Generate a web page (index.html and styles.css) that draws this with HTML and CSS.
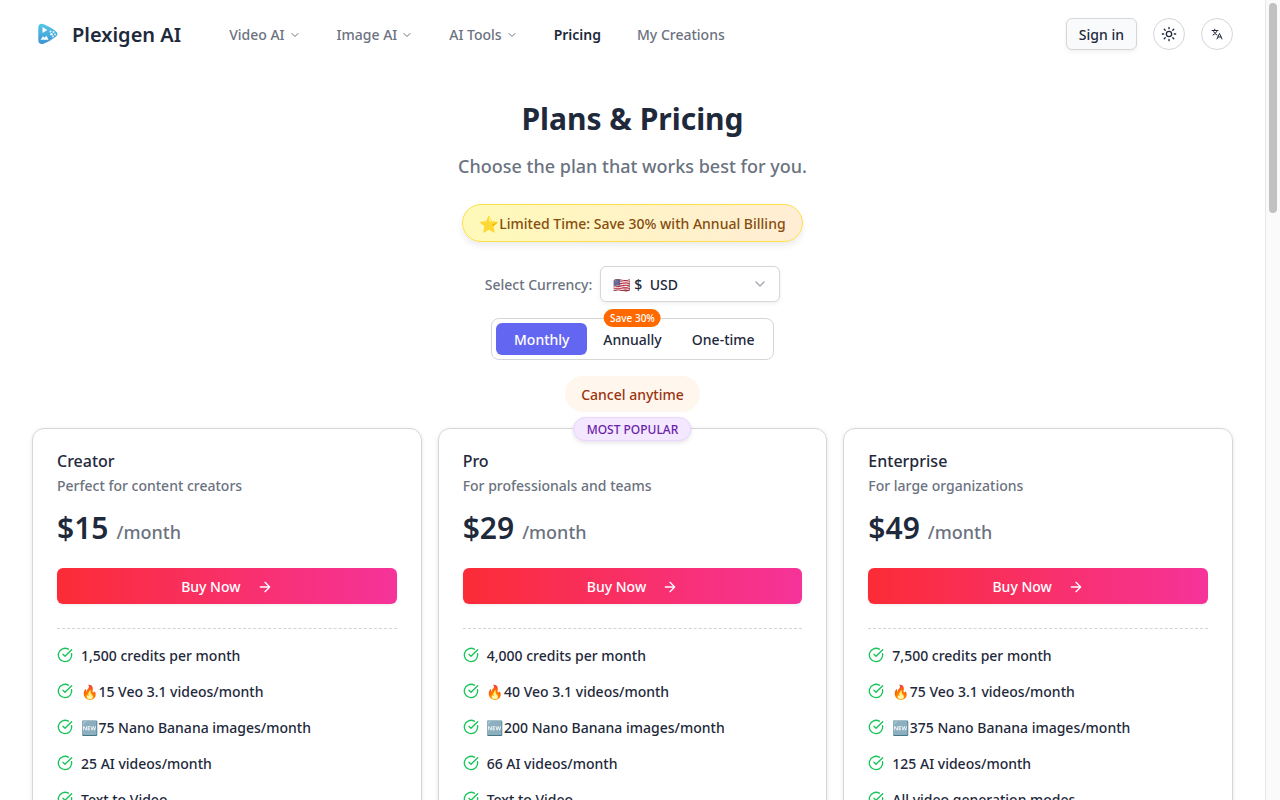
FILE: index.html
```html
<!DOCTYPE html>
<html lang="en">

<head>
    <meta charset="UTF-8">
    <meta name="viewport" content="width=device-width, initial-scale=1">
    <title>Plexigen AI</title>
    <link rel="stylesheet" href="styles.css">
</head>

<body>
    <svg class="sprite" aria-hidden="true">
        <symbol id="chevron" viewBox="0 0 24 24"><path d="m6 9 6 6 6-6"/></symbol>
        <symbol id="arrow" viewBox="0 0 24 24"><path d="M5 12h14M12 5l7 7-7 7"/></symbol>
        <symbol id="check" viewBox="0 0 24 24"><path d="M21.8 10A10 10 0 1 1 17 3.3M9 11l3 3L22 4"/></symbol>
    </svg>

    <header class="header">
        <a class="brand" href="#">
            <svg class="logo" viewBox="0 0 32 32" aria-hidden="true">
                <defs>
                    <linearGradient id="logoFill" x1="0" y1="0" x2="0" y2="1">
                        <stop offset="0" stop-color="#56c8e6"/>
                        <stop offset="1" stop-color="#3d93d6"/>
                    </linearGradient>
                </defs>
                <path fill="url(#logoFill)" d="M6.300 9.500C6.300 6 9 5 12 6.300C16 8 20 10.500 23.500 13C26.200 15 26.200 17 23.500 19C20 21.500 16 24 12 25.500C9 26.800 6.300 25.500 6.300 22.500Z"/>
                <path fill="#fff" d="M10.500 9l4.800 3-4.800 3z"/>
                <path fill="#fff" d="M8.500 21.800l2.500-3.500 1.500 1.500 2-2 2 4z"/>
                <g fill="#e4f7fd">
                    <circle cx="18.500" cy="13.500" r="1"/>
                    <circle cx="21.500" cy="14" r="1"/>
                    <circle cx="19.500" cy="16.300" r="1.300"/>
                    <circle cx="23" cy="16.500" r=".9"/>
                    <circle cx="21" cy="18.500" r=".9"/>
                </g>
            </svg>
            <span>Plexigen AI</span>
        </a>
        <nav class="nav">
            <a href="#">Video AI <svg class="icon"><use href="#chevron"/></svg></a>
            <a href="#">Image AI <svg class="icon"><use href="#chevron"/></svg></a>
            <a href="#">AI Tools <svg class="icon"><use href="#chevron"/></svg></a>
            <a class="active" href="#">Pricing</a>
            <a href="#">My Creations</a>
        </nav>
        <div class="actions">
            <button class="signin" type="button">Sign in</button>
            <button class="round" type="button" aria-label="Theme">
                <svg class="icon" viewBox="0 0 24 24"><circle cx="12" cy="12" r="4"/><path d="M12 2v2M12 20v2M4.900 4.900l1.400 1.400M17.700 17.700l1.400 1.400M2 12h2M20 12h2M6.300 17.700l-1.400 1.400M19.100 4.900l-1.400 1.400"/></svg>
            </button>
            <button class="round lang" type="button" aria-label="Language">
                <svg class="icon" viewBox="0 0 24 24"><path d="M2 5h12M7.500 2.500V5M4 14c4-2 7-5 8-9M4.500 5c1 4 4 7 7.500 9M12 22l5-11 5 11M14 18h6"/></svg>
            </button>
        </div>
    </header>

    <main class="main">
        <section class="intro">
            <h1>Plans &amp; Pricing</h1>
            <p class="subtitle">Choose the plan that works best for you.</p>
            <p class="promo"><span class="star">⭐</span>Limited Time: Save 30% with Annual Billing</p>
            <div class="currency">
                <label for="currency">Select Currency:</label>
                <div class="select">
                    <select id="currency">
                        <option>🇺🇸 $&nbsp; USD</option>
                    </select>
                    <svg class="icon"><use href="#chevron"/></svg>
                </div>
            </div>
            <div class="period">
                <button class="active" type="button">Monthly</button>
                <button type="button">Annually<span class="save">Save 30%</span></button>
                <button type="button">One-time</button>
            </div>
            <p class="cancel">Cancel anytime</p>
        </section>

        <section class="plans">
            <article class="card">
                <h2>Creator</h2>
                <p class="desc">Perfect for content creators</p>
                <p class="price"><strong>$15</strong> <span>/month</span></p>
                <button class="buy" type="button">Buy Now <svg class="icon"><use href="#arrow"/></svg></button>
                <ul class="features">
                    <li><svg class="icon"><use href="#check"/></svg>1,500 credits per month</li>
                    <li><svg class="icon"><use href="#check"/></svg>🔥15 Veo 3.1 videos/month</li>
                    <li><svg class="icon"><use href="#check"/></svg>🆕75 Nano Banana images/month</li>
                    <li><svg class="icon"><use href="#check"/></svg>25 AI videos/month</li>
                    <li><svg class="icon"><use href="#check"/></svg>Text to Video</li>
                </ul>
            </article>
            <article class="card">
                <span class="popular">MOST POPULAR</span>
                <h2>Pro</h2>
                <p class="desc">For professionals and teams</p>
                <p class="price"><strong>$29</strong> <span>/month</span></p>
                <button class="buy" type="button">Buy Now <svg class="icon"><use href="#arrow"/></svg></button>
                <ul class="features">
                    <li><svg class="icon"><use href="#check"/></svg>4,000 credits per month</li>
                    <li><svg class="icon"><use href="#check"/></svg>🔥40 Veo 3.1 videos/month</li>
                    <li><svg class="icon"><use href="#check"/></svg>🆕200 Nano Banana images/month</li>
                    <li><svg class="icon"><use href="#check"/></svg>66 AI videos/month</li>
                    <li><svg class="icon"><use href="#check"/></svg>Text to Video</li>
                </ul>
            </article>
            <article class="card">
                <h2>Enterprise</h2>
                <p class="desc">For large organizations</p>
                <p class="price"><strong>$49</strong> <span>/month</span></p>
                <button class="buy" type="button">Buy Now <svg class="icon"><use href="#arrow"/></svg></button>
                <ul class="features">
                    <li><svg class="icon"><use href="#check"/></svg>7,500 credits per month</li>
                    <li><svg class="icon"><use href="#check"/></svg>🔥75 Veo 3.1 videos/month</li>
                    <li><svg class="icon"><use href="#check"/></svg>🆕375 Nano Banana images/month</li>
                    <li><svg class="icon"><use href="#check"/></svg>125 AI videos/month</li>
                    <li><svg class="icon"><use href="#check"/></svg>All video generation modes</li>
                </ul>
            </article>
        </section>
    </main>
    <div class="scrollbar"><div class="thumb"></div></div>
</body>

</html>
```
FILE: styles.css
```css
* {
    box-sizing: border-box;
    margin: 0;
    padding: 0;
}

html {
    scrollbar-width: none;
}

body {
    padding-right: 15px;
    font-family: "Noto Sans", "Noto Color Emoji", sans-serif;
    font-size: 14px;
    font-weight: 500;
    line-height: 20px;
    color: #1e293b;
    background: #fff;
}

a {
    color: inherit;
    text-decoration: none;
}

button,
select {
    font: inherit;
    color: inherit;
    cursor: pointer;
}

ul {
    list-style: none;
}

.sprite {
    display: none;
}

.icon {
    flex: none;
    width: 16px;
    height: 16px;
    fill: none;
    stroke: currentColor;
    stroke-width: 2;
    stroke-linecap: round;
    stroke-linejoin: round;
}

/* header */
.header {
    display: flex;
    align-items: center;
    padding: 18px 32px;
}

.brand {
    display: flex;
    align-items: center;
    gap: 8px;
    margin-right: 48px;
    font-size: 20px;
    font-weight: 600;
}

.brand span,
.nav {
    padding-top: 2px;
}

.logo {
    width: 32px;
    height: 32px;
}

.nav {
    display: flex;
    gap: 36px;
    color: #6b7280;
}

.nav a {
    display: flex;
    align-items: center;
    gap: 4px;
}

.nav .icon {
    width: 12px;
    height: 12px;
}

.nav .active {
    font-weight: 600;
    color: #1e293b;
}

.actions {
    display: flex;
    gap: 16px;
    margin-left: auto;
}

.signin {
    height: 32px;
    padding: 2px 12px 0;
    border: 1px solid #d4d6d8;
    border-radius: 6px;
    background: #f8fafb;
    box-shadow: 0 2px 4px rgba(0, 0, 0, .06);
}

.round {
    display: flex;
    align-items: center;
    justify-content: center;
    width: 32px;
    height: 32px;
    border: 1px solid #d4d6d8;
    border-radius: 50%;
    background: #fff;
}

.lang .icon {
    width: 12px;
    height: 12px;
}

/* intro */
.main {
    padding: 33px 32px 64px;
}

.intro {
    display: flex;
    flex-direction: column;
    align-items: center;
    gap: 16px;
    margin-bottom: 16px;
}

.intro h1 {
    font-size: 30px;
    line-height: 36px;
    font-weight: 700;
}

.subtitle {
    font-size: 18px;
    line-height: 26px;
    color: #6b7280;
}

.promo {
    display: flex;
    height: 38px;
    margin: 9px 0 8px;
    padding: 9px 16px 0;
    border: 1px solid #fde047;
    border-radius: 20px;
    background: linear-gradient(90deg, #fef9b8, #ffedd5);
    box-shadow: 0 4px 6px rgba(0, 0, 0, .08);
    color: #854d0e;
}

.star {
    font-size: 16px;
}

.currency {
    display: flex;
    align-items: center;
    gap: 8px;
    color: #6b7280;
}

.currency label {
    padding-top: 2px;
}

.select {
    display: grid;
    align-items: center;
}

.select > * {
    grid-area: 1 / 1;
}

.select select {
    width: 180px;
    height: 36px;
    padding: 2px 12px 0;
    border: 1px solid #d4d6d8;
    border-radius: 6px;
    appearance: none;
    background: #fff;
    box-shadow: 0 2px 4px rgba(0, 0, 0, .06);
    color: #1e293b;
}

.select .icon {
    justify-self: end;
    margin-right: 12px;
    color: #a3a7ae;
    pointer-events: none;
}

.period {
    display: grid;
    grid-template-columns: repeat(3, 1fr);
    padding: 4px;
    border: 1px solid #d4d6d8;
    border-radius: 8px;
}

.period button {
    position: relative;
    height: 32px;
    padding: 2px 14px 0;
    border: 0;
    border-radius: 6px;
    background: none;
}

.period .active {
    background: #6366f1;
    color: #fff;
}

.save {
    position: absolute;
    top: -14px;
    left: 50%;
    transform: translateX(-50%);
    padding: 1px 6px;
    border-radius: 10px;
    background: #ff6900;
    color: #fff;
    font-size: 10px;
    line-height: 16px;
    white-space: nowrap;
}

.cancel {
    padding: 9px 16px 7px;
    border-radius: 18px;
    background: #fff7ed;
    color: #9a3412;
}

/* plans */
.plans {
    display: grid;
    grid-template-columns: repeat(3, 1fr);
    gap: 16px;
}

.card {
    position: relative;
    padding: 24px;
    border: 1px solid #d4d6d8;
    border-radius: 12px;
    box-shadow: 0 1px 4px rgba(0, 0, 0, .1);
}

.popular {
    position: absolute;
    top: -12px;
    left: 50%;
    transform: translateX(-50%);
    padding: 4px 12px 2px;
    border: 1px solid #e9d5ff;
    border-radius: 12px;
    background: #f3e8ff;
    box-shadow: 0 2px 4px rgba(0, 0, 0, .1);
    color: #6b21a8;
    font-size: 12px;
    line-height: 16px;
    white-space: nowrap;
}

.card h2 {
    font-size: 16px;
    line-height: 16px;
    font-weight: 500;
}

.desc {
    margin-top: 7px;
    color: #6b7280;
}

.price {
    display: flex;
    align-items: baseline;
    gap: 8px;
    margin: 14px 0 18px;
    line-height: 36px;
}

.price strong {
    font-size: 30px;
    font-weight: 600;
}

.price span {
    font-size: 18px;
    color: #6b7280;
}

.buy {
    display: flex;
    align-items: center;
    justify-content: center;
    gap: 16px;
    width: 100%;
    height: 36px;
    padding-top: 1px;
    border: 0;
    border-radius: 6px;
    background: linear-gradient(90deg, #fb2c36, #f6339a);
    box-shadow: 0 1px 3px rgba(0, 0, 0, .08);
    color: #fff;
}

.features {
    display: grid;
    gap: 16px;
    margin-top: 24px;
    padding-top: 17px;
    border-top: 1px dashed #d1d5db;
}

.features li {
    display: flex;
    gap: 8px;
}

.features .icon {
    margin-top: 1px;
    color: #16c458;
}

/* scrollbar on the right edge */
.scrollbar {
    position: fixed;
    top: 0;
    right: 0;
    bottom: 0;
    width: 15px;
    padding: 3px;
    border-left: 1px solid #e8e8e8;
    background: #fafafa;
}

.thumb {
    width: 8px;
    height: 210px;
    border-radius: 4px;
    background: #c1c1c1;
}
```
